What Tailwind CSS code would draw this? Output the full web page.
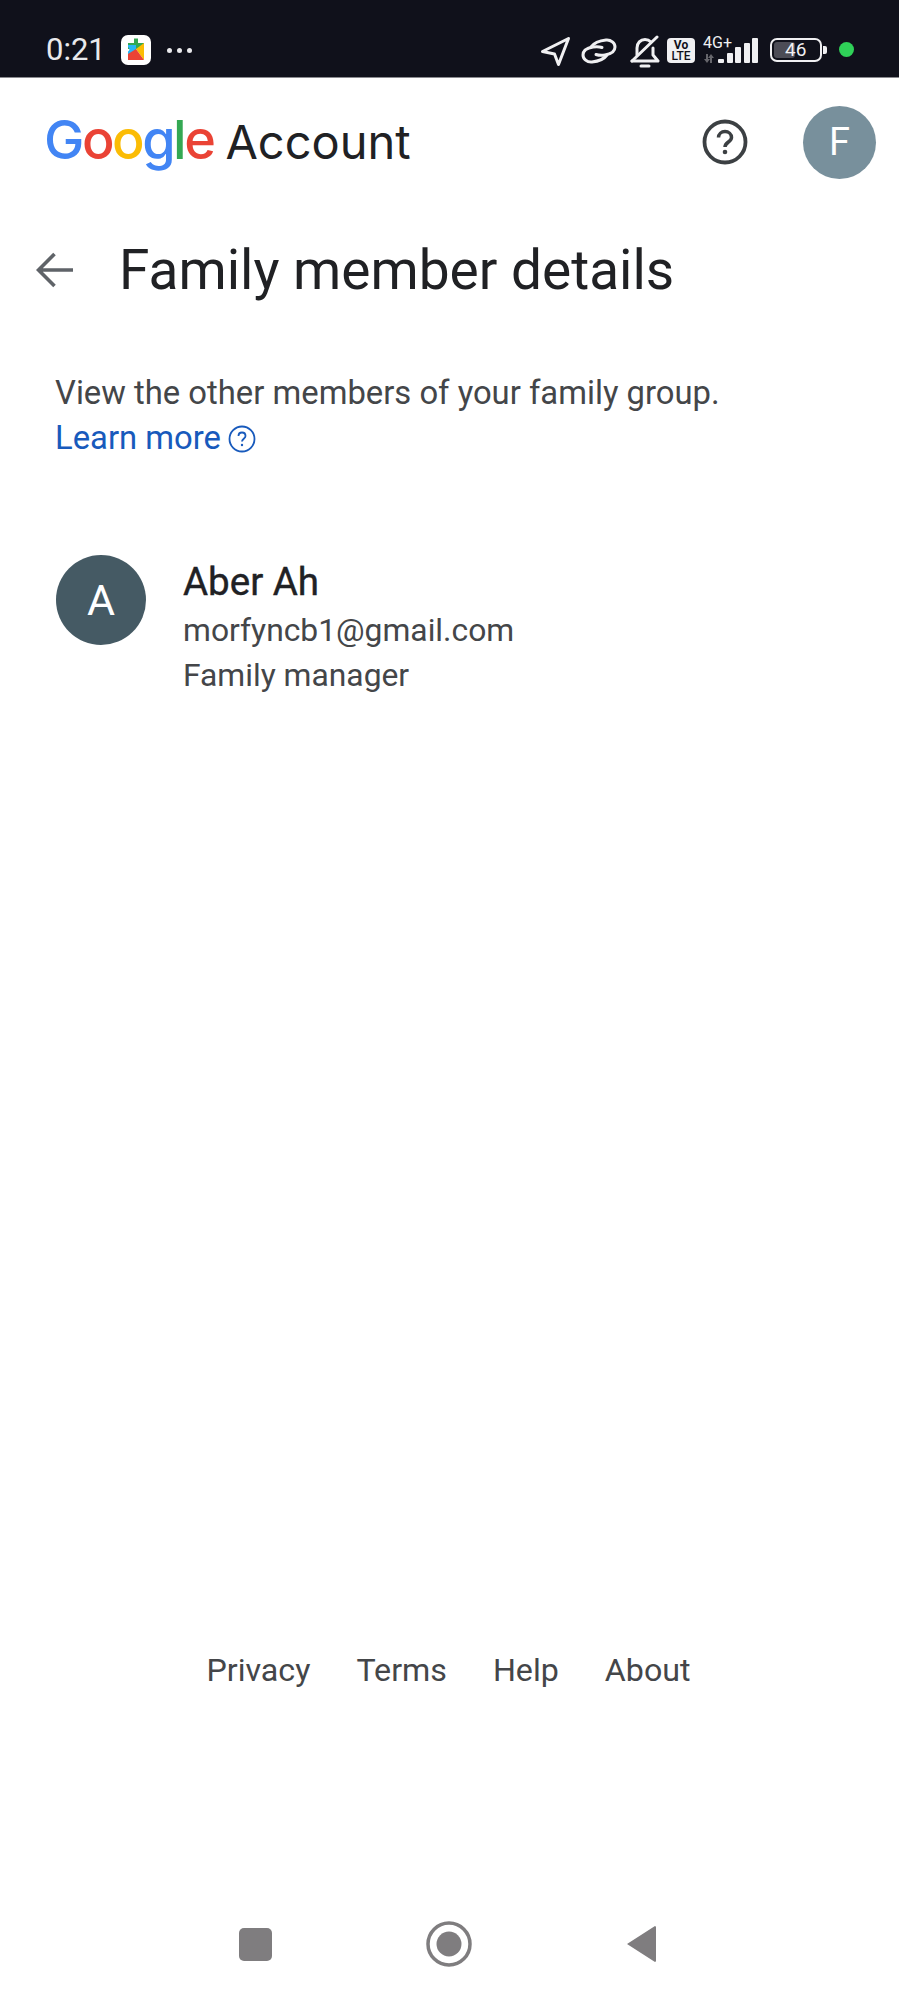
<!doctype html>
<html lang="en">
<head>
<meta charset="utf-8">
<title>Family member details</title>
<script src="https://cdn.jsdelivr.net/npm/@tailwindcss/browser@4"></script>
</head>
<body class="bg-white">
<div class="w-[899px] h-[1999px] flex flex-col overflow-hidden font-['Roboto',sans-serif]">

  <!-- status bar -->
  <div class="h-[78px] shrink-0 bg-[#10111b] border-b border-[#8a8a8f] flex items-start pt-[34px] pl-[46px] text-[#e9e9ec]">
    <span class="text-[31px] leading-[32px] w-[75px]">0:21</span>
    <svg class="w-[30px] h-[30px] mt-[1px]" viewBox="0 0 30 30">
      <rect width="30" height="30" rx="7" fill="#fff"/>
      <path d="M13 3.500h4V8h-4z" fill="#34a853"/>
      <path d="M7 8h16v6H7z" fill="#34a853"/>
      <path d="M7 10h8v9H7v-2.500a2.500 2.500 0 0 0 0-4.500z" fill="#29b6f6"/>
      <path d="M15 14 23 8v17z" fill="#fbbc04"/>
      <path d="M7 19l8-5 8 11H7z" fill="#ea4335"/>
    </svg>
    <div class="flex gap-[5px] ml-[16px] mt-[14px]">
      <i class="w-[5px] h-[5px] rounded-full bg-[#e9e9ec]"></i>
      <i class="w-[5px] h-[5px] rounded-full bg-[#e9e9ec]"></i>
      <i class="w-[5px] h-[5px] rounded-full bg-[#e9e9ec]"></i>
    </div>
    <div class="ml-auto flex items-start pr-[45px]">
      <svg class="w-[31px] h-[31px] mt-[2px]" viewBox="0 0 31 31" fill="none" stroke="#f0f0f2" stroke-width="3" stroke-linejoin="round"><path d="M28.500 2.500 2.500 15.500l12 2.500 4 10.500z"/></svg>
      <svg class="w-[36px] h-[26px] ml-[10px] mt-[4px]" viewBox="0 0 36 26" fill="none" stroke="#f0f0f2" stroke-width="3" stroke-linecap="round"><path d="M21 9.500c-3-1-6-1-9-.5C6 10 2 13 2 17c0 4 4 7.500 9 7 5-.5 11-1.500 15-7"/><path d="M15 16.500c3 1 6 1 9 .5 6-1 10-4 10-8 0-4-4-7.500-9-7-5 .5-11 1.500-15 7"/></svg>
      <svg class="w-[31px] h-[33px] ml-[12px] mt-[1px]" viewBox="0 0 31 33" fill="none" stroke="#f0f0f2" stroke-width="3" stroke-linecap="round" stroke-linejoin="round"><path d="M8 20V13c0-5 3.500-8.500 8-8.500 2.500 0 4.500 1 6 2.500M24 13v7l5 6H3"/><path d="M28 2 3 26"/><path d="M12 31h8"/></svg>
      <div class="w-[28px] h-[25px] ml-[7px] mt-[4px] bg-[#f0f0f2] rounded-[4px] text-[#10111b] font-bold text-[12px] leading-[11px] text-center pt-[2px]"><div>Vo</div><div class="font-medium">LTE</div></div>
      <div class="relative w-[56px] h-[32px] ml-[7px] mt-[1px]">
        <span class="absolute left-[1px] top-0 text-[16px] leading-[16px] text-[#f0f0f2]">4G+</span>
        <svg class="absolute left-[1px] top-[19px] w-[12px] h-[9px]" viewBox="0 0 12 9" fill="#66666c"><path d="M3 0h2v5h2L4 9 1 5h2zM8 0l3 4H9v5H7V4H5z"/></svg>
        <div class="absolute left-[16px] bottom-[4px] flex items-end gap-[2.500px]">
          <i class="w-[6px] h-[4px] bg-[#f0f0f2] rounded-[1px]"></i>
          <i class="w-[6px] h-[10px] bg-[#f0f0f2] rounded-[1px]"></i>
          <i class="w-[6px] h-[16px] bg-[#f0f0f2] rounded-[1px]"></i>
          <i class="w-[6px] h-[20px] bg-[#f0f0f2] rounded-[1px]"></i>
          <i class="w-[6px] h-[25px] bg-[#f0f0f2] rounded-[1px]"></i>
        </div>
      </div>
      <div class="relative w-[52px] h-[24px] ml-[12px] mt-[4px] border-[2px] border-[#f0f0f2] rounded-[7px] p-[2px]">
        <div class="w-[21px] h-full bg-[#4c4c56] rounded-[3px]"></div>
        <span class="absolute left-[13px] top-0 text-[19px] leading-[20px] text-[#f0f0f2]">46</span>
      </div>
      <i class="w-[4px] h-[8px] ml-[1px] mt-[12px] bg-[#f0f0f2] rounded-r-[2px]"></i>
      <i class="w-[15px] h-[15px] ml-[12px] mt-[8px] rounded-full bg-[#2fd158]"></i>
    </div>
  </div>

  <!-- header -->
  <div class="h-[128px] shrink-0 flex items-center pl-[44px] pr-[23px]">
    <div class="flex items-baseline font-['Inter',sans-serif] -mt-[2px]">
      <span class="text-[54px] leading-[64px] font-medium tracking-[-2.500px]"><span class="text-[#4285f4]">G</span><span class="text-[#ea4335]">o</span><span class="text-[#fbbc05]">o</span><span class="text-[#4285f4]">g</span><span class="text-[#34a853]">l</span><span class="text-[#ea4335]">e</span></span>
      <span class="ml-[12px] text-[47px] leading-[64px] text-[#202124]">Account</span>
    </div>
    <svg class="ml-auto w-[48px] h-[48px]" viewBox="0 0 48 48" fill="none" stroke="#3c4043"><circle cx="24" cy="24" r="20.500" stroke-width="3.800"/><path d="M17.500 19.500c0-3.500 3-6 6.500-6s6.500 2.500 6.500 6c0 4.500-6.500 4.500-6.500 9.500" stroke-width="3.500"/><circle cx="24" cy="34" r="2.300" fill="#3c4043" stroke="none"/></svg>
    <div class="ml-[54px] w-[73px] h-[73px] rounded-full bg-[#78909c] flex items-center justify-center text-white text-[38px]">F</div>
  </div>

  <!-- title -->
  <div class="mt-[26px] h-[76px] shrink-0 flex items-center pl-[36px]">
    <svg class="w-[37px] h-[36px]" viewBox="0 0 37 36" fill="none" stroke="#5f6368" stroke-width="3.600"><path d="M37 18H3M18.500 2 2.500 18l16 16"/></svg>
    <h1 class="ml-[46px] text-[55px] leading-[76px] font-normal text-[#202124] font-['Roboto',sans-serif]">Family member details</h1>
  </div>

  <!-- intro -->
  <div class="mt-[63px] pl-[55px] text-[32.800px] leading-[45px] text-[#444649]">
    <p>View the other members of your family group.</p>
    <p class="flex items-center text-[#185abc]">Learn more
      <svg class="ml-[7px] w-[28px] h-[28px] mt-[1px]" viewBox="0 0 28 28" fill="none" stroke="#185abc" stroke-width="1.800"><circle cx="14" cy="14" r="12.500"/><path d="M10.500 11c0-2 1.500-3.500 3.500-3.500s3.500 1.500 3.500 3.500c0 2.500-3.500 3-3.500 5.500"/><circle cx="14" cy="20" r="1.200" fill="#185abc" stroke="none"/></svg>
    </p>
  </div>

  <!-- member -->
  <div class="mt-[94px] pl-[56px] flex items-start">
    <div class="w-[90px] h-[90px] shrink-0 rounded-full bg-[#455a64] flex items-center justify-center text-white text-[43px]">A</div>
    <div class="ml-[37px] pt-[4px] text-[#444649] text-[31.800px] leading-[45px]">
      <div class="text-[38.500px] leading-[45px] text-[#202124] [-webkit-text-stroke:0.4px_#202124]">Aber Ah</div>
      <div class="mt-[4px]">morfyncb1@gmail.com</div>
      <div>Family manager</div>
    </div>
  </div>

  <!-- footer -->
  <div class="mt-auto -ml-[2px] flex justify-center gap-[46px] text-[32.200px] leading-[45px] text-[#444649]">
    <span>Privacy</span><span>Terms</span><span>Help</span><span>About</span>
  </div>

  <!-- nav bar -->
  <div class="mt-[231px] mb-[35px] h-[40px] shrink-0 flex items-center pl-[239px]">
    <i class="w-[33px] h-[33px] rounded-[5px] bg-[#7f7d7f]"></i>
    <svg class="ml-[154px] w-[46px] h-[46px]" viewBox="0 0 46 46"><circle cx="23" cy="23" r="21" fill="none" stroke="#7f7d7f" stroke-width="3.500"/><circle cx="23" cy="23" r="12.500" fill="#7f7d7f"/></svg>
    <svg class="ml-[153px] w-[32px] h-[40px]" viewBox="0 0 32 40"><path d="M30 2 2 20l28 18a1.500 1.500 0 0 0 1-1.500V3.500A1.500 1.500 0 0 0 30 2z" fill="#7f7d7f"/></svg>
  </div>
</div>
</body>
</html>
